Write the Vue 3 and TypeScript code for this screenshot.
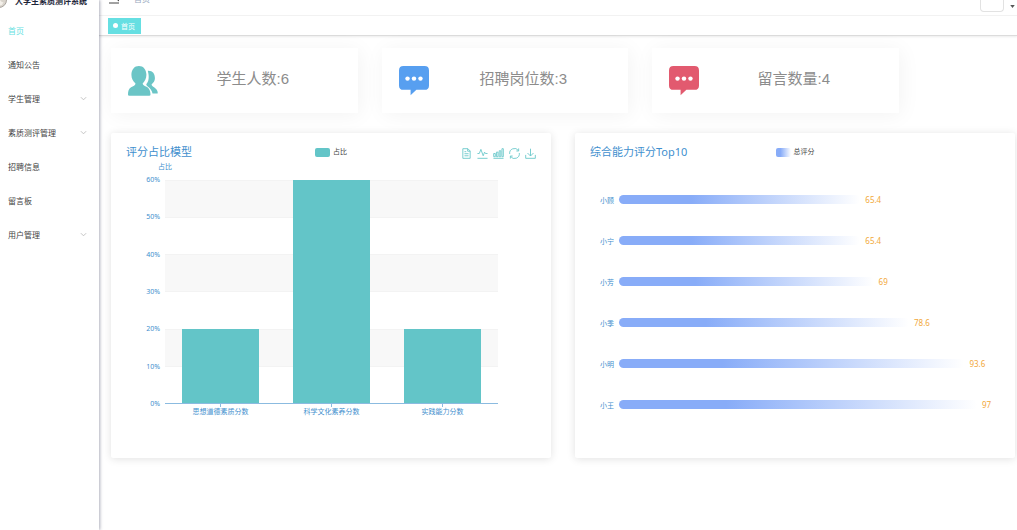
<script setup lang="ts">
interface MenuItem {
  label: string
  active?: boolean
  children?: boolean
}

interface Stat {
  label: string
  value: number
  icon: 'people' | 'chat'
  tone: string
}

interface Entry {
  name: string
  value: number
}

const menu: MenuItem[] = [
  { label: '首页', active: true },
  { label: '通知公告' },
  { label: '学生管理', children: true },
  { label: '素质测评管理', children: true },
  { label: '招聘信息' },
  { label: '留言板' },
  { label: '用户管理', children: true },
]

const stats: Stat[] = [
  { label: '学生人数', value: 6, icon: 'people', tone: 'teal' },
  { label: '招聘岗位数', value: 3, icon: 'chat', tone: 'blue' },
  { label: '留言数量', value: 4, icon: 'chat', tone: 'red' },
]

const ratioMax = 60
const ratioTicks: number[] = [60, 50, 40, 30, 20, 10, 0]
const ratios: Entry[] = [
  { name: '思想道德素质分数', value: 20 },
  { name: '科学文化素养分数', value: 60 },
  { name: '实践能力分数', value: 20 },
]

const scores: Entry[] = [
  { name: '小顾', value: 65.4 },
  { name: '小宁', value: 65.4 },
  { name: '小芳', value: 69 },
  { name: '小季', value: 78.6 },
  { name: '小明', value: 93.6 },
  { name: '小王', value: 97 },
]

const tools: { label: string; path: string }[] = [
  { label: '数据视图', path: 'M4 1.500h11l5 5v16H4zM14.500 1.500v5.500h5.500M7.500 8h4M7.500 12.500h9M7.500 17h9' },
  { label: '切换为折线图', path: 'M1 12h4l3.500-9 5 14 3-8 2 3h4.500M1 22.500h22' },
  { label: '切换为柱状图', path: 'M1.500 12h3.500v7h-3.500zM7.500 9h3.500v10h-3.500zM13.500 6h3.500v13h-3.500zM19.500 1.500h3v17.500h-3zM1 22.500h22' },
  { label: '还原', path: 'M1.500 13a10.500 10.500 0 0 1 19-7.500M22.500 11a10.500 10.500 0 0 1-19 7.500M21 1v5.500h-5M3 23v-5.500h5' },
  { label: '保存为图片', path: 'M12 1.500v16M5.500 11l6.500 6.500 6.500-6.500M1.500 15v7.500h21v-7.500' },
]
</script>

<template>
  <div class="app">
    <aside class="sidebar">
      <div class="brand">
        <svg class="brand-logo" viewBox="0 0 16 16" aria-hidden="true">
          <circle cx="8" cy="8" r="7.500" fill="#d9d4cc" stroke="#aaa59f" />
          <path d="M3 9q3-5 6-1t4 1l-2 4q-5 2-8-4z" fill="#f4f0ea" />
          <path d="M5 6l3 3 3-4" fill="none" stroke="#a39a8f" />
        </svg>
        <strong class="brand-name">大学生素质测评系统</strong>
      </div>
      <nav class="menu">
        <template v-for="item in menu" :key="item.label">
          <button v-if="item.children" type="button" class="menu-item" aria-expanded="false">
            <span>{{ item.label }}</span>
            <svg class="chevron" viewBox="0 0 8 8" aria-hidden="true"><path d="M1 2.500l3 3 3-3" /></svg>
          </button>
          <a v-else href="#" class="menu-item" :class="{ active: item.active }">{{ item.label }}</a>
        </template>
      </nav>
    </aside>

    <div class="page">
      <header class="navbar">
        <button type="button" class="hamburger" aria-label="折叠菜单">
          <svg viewBox="0 0 10 10" aria-hidden="true">
            <path d="M0 1h10M0 5.500h7M0 9h10" stroke="#444" fill="none" />
            <path d="M10 3.500v4l-2.500-2z" fill="#444" />
          </svg>
        </button>
        <span class="crumb">首页</span>
        <button type="button" class="account" aria-label="用户菜单">
          <span class="avatar"></span>
          <svg class="caret" viewBox="0 0 6 4" aria-hidden="true"><path d="M0 0h6l-3 4z" /></svg>
        </button>
      </header>
      <div class="tags">
        <a href="#" class="tag"><i class="dot"></i>首页</a>
      </div>

      <main class="content">
        <section class="stats">
          <article v-for="s in stats" :key="s.label" class="stat">
            <svg class="stat-icon" :class="s.tone" viewBox="0 0 88 88" aria-hidden="true">
              <g v-if="s.icon === 'people'">
                <path d="M32 0C45 0 54 10 54 26C54 38 49 45 43 51C43 56 52 59 58 63C64 68 66 76 66 84Q66 87 62 87H4Q0 87 0 84C0 74 2 66 9 62C15 58 22 57 22 51C15 45 10 38 10 26C10 10 19 0 32 0Z" />
                <path d="M58 14C72 13 79 22 79 36C79 44 75 49 69 54C69 59 76 61 80 65C86 70 88 76 87 81H72C70 72 66 66 58 60C54 57 53 55 54 53C61 46 63 32 58 14Z" />
              </g>
              <g v-else>
                <path d="M13 0H75Q88 0 88 13V57Q88 70 75 70H51L34 86V70H13Q0 70 0 57V13Q0 0 13 0Z" />
                <circle cx="25" cy="37" r="6.500" fill="#fff" />
                <circle cx="44" cy="37" r="6.500" fill="#fff" />
                <circle cx="63" cy="37" r="6.500" fill="#fff" />
              </g>
            </svg>
            <p class="stat-text">{{ s.label }}:{{ s.value }}</p>
          </article>
        </section>

        <section class="charts">
          <article class="panel">
            <header class="panel-head">
              <h2>评分占比模型</h2>
              <span class="legend"><i class="swatch solid"></i>占比</span>
              <div class="tools">
                <button v-for="t in tools" :key="t.label" type="button" :aria-label="t.label">
                  <svg viewBox="0 0 24 24" aria-hidden="true"><path :d="t.path" /></svg>
                </button>
              </div>
            </header>
            <div class="columns">
              <span class="axis-name">占比</span>
              <div class="y-axis">
                <span v-for="t in ratioTicks" :key="t">{{ t }}%</span>
              </div>
              <div class="plot">
                <div class="bands"><i v-for="n in 6" :key="n"></i></div>
                <div class="bars">
                  <div v-for="r in ratios" :key="r.name" class="slot">
                    <div class="bar" :style="{ height: (r.value / ratioMax) * 100 + '%' }"></div>
                  </div>
                </div>
              </div>
              <div class="x-axis">
                <span v-for="r in ratios" :key="r.name">{{ r.name }}</span>
              </div>
            </div>
          </article>

          <article class="panel">
            <header class="panel-head">
              <h2>综合能力评分Top10</h2>
              <span class="legend"><i class="swatch fade"></i>总评分</span>
            </header>
            <ul class="ranking">
              <li v-for="s in scores" :key="s.name">
                <span class="who">{{ s.name }}</span>
                <div class="track">
                  <div class="score-bar" :style="{ width: s.value + '%' }"></div>
                  <span class="score">{{ s.value }}</span>
                </div>
              </li>
            </ul>
          </article>
        </section>
      </main>
    </div>
  </div>
</template>

<style>
body {
  margin: 0;
  background: #fff;
}
</style>

<style scoped>
* {
  box-sizing: border-box;
}
.app {
  display: flex;
  min-height: 100vh;
  overflow: hidden;
  font-family: "Liberation Sans", "Noto Sans CJK SC", sans-serif;
  font-size: 8px;
  color: #444;
}
button {
  padding: 0;
  border: 0;
  background: none;
  font: inherit;
  color: inherit;
}
a {
  color: inherit;
  text-decoration: none;
}
svg {
  display: block;
}

.sidebar {
  flex: none;
  width: 99px;
  background: #fff;
  box-shadow: 1px 0 3px rgba(20, 25, 60, 0.35);
  z-index: 1;
}
.brand {
  display: flex;
  align-items: center;
  gap: 8px;
  height: 16px;
  margin: -8px 0 6px -9px;
}
.brand-logo {
  flex: none;
  width: 16px;
  height: 16px;
}
.brand-name {
  white-space: nowrap;
  color: #1c2438;
}
.menu {
  display: flex;
  flex-direction: column;
}
.menu-item {
  display: flex;
  align-items: center;
  justify-content: space-between;
  height: 34px;
  padding: 0 12px 2px 8px;
}
.menu-item.active {
  color: #66dfe2;
}
.chevron {
  width: 7px;
  height: 7px;
  fill: none;
  stroke: #bbb;
}

.page {
  flex: 1;
  min-width: 0;
}
.navbar {
  display: flex;
  align-items: flex-start;
  height: 16px;
  padding: 0 2px 0 10px;
  border-bottom: 1px solid #f3f3f3;
}
.hamburger {
  width: 10px;
  height: 10px;
  margin-top: -6px;
}
.crumb {
  margin: -8px 0 0 15px;
  line-height: 16px;
  color: #97a8be;
}
.account {
  display: flex;
  align-items: flex-end;
  gap: 6px;
  margin-left: auto;
}
.avatar {
  width: 24px;
  height: 12px;
  border: solid #e2e2e2;
  border-width: 0 1px 1px;
  border-radius: 0 0 4px 4px;
}
.caret {
  width: 5px;
  height: 3px;
  margin-bottom: 4px;
  fill: #555;
}
.tags {
  display: flex;
  align-items: center;
  height: 20px;
  padding-left: 9px;
  border-bottom: 1px solid #dcdcdc;
  box-shadow: 0 1px 2px rgba(0, 0, 0, 0.08);
}
.tag {
  display: flex;
  align-items: center;
  gap: 3px;
  height: 16px;
  padding: 0 6px 0 5px;
  font-size: 7px;
  color: #fff;
  background: #66dfe2;
}
.dot {
  width: 5px;
  height: 5px;
  border-radius: 50%;
  background: #fff;
}

.content {
  padding: 12px 2px 24px 12px;
}
.stats {
  display: grid;
  grid-template-columns: 8fr 8fr 8fr 3fr;
  gap: 24px;
  margin-bottom: 20px;
}
.stat {
  display: flex;
  align-items: center;
  height: 65px;
  padding: 0 10px 0 17px;
  background: #fff;
  box-shadow: 2px 2px 20px rgba(0, 0, 0, 0.05);
}
.stat-icon {
  flex: none;
  width: 30px;
  height: 30px;
}
.stat-icon.teal {
  fill: #6bc5c6;
}
.stat-icon.blue {
  fill: #579ff0;
}
.stat-icon.red {
  fill: #e25a6f;
}
.stat-text {
  flex: 1;
  margin: 0;
  padding-bottom: 4px;
  font-size: 15px;
  line-height: 20px;
  text-align: center;
  color: #8c8c8c;
}

.charts {
  display: grid;
  grid-template-columns: 1fr 1fr;
  gap: 24px;
  font-family: "Noto Sans", "Noto Sans CJK SC", sans-serif;
}
.panel {
  padding: 11px 0 33px;
  border-radius: 2px;
  background: #fff;
  box-shadow: 0 1px 8px rgba(0, 0, 0, 0.12);
}
.panel-head {
  display: grid;
  grid-template-columns: 1fr auto 1fr;
  align-items: center;
  height: 16px;
  padding: 0 15px;
}
.panel-head h2 {
  margin: 0;
  font-size: 11px;
  line-height: 16px;
  font-weight: 400;
  color: #3f8fce;
}
.legend {
  display: flex;
  align-items: center;
  gap: 3px;
  font-size: 7px;
  line-height: 10px;
}
.swatch {
  width: 15px;
  height: 9px;
  border-radius: 2px;
}
.swatch.solid {
  background: #63c5c8;
}
.swatch.fade {
  background: linear-gradient(90deg, #88acf8 30%, #fff);
}
.tools {
  display: flex;
  justify-content: flex-end;
  gap: 5px;
  padding-top: 3px;
}
.tools svg {
  width: 11px;
  height: 11px;
  fill: none;
  stroke: #6dc9cc;
  stroke-width: 2;
}

.columns {
  display: grid;
  grid-template-columns: 54px 1fr 53px;
  font-size: 7px;
  line-height: 8px;
  color: #3f8fce;
}
.axis-name {
  grid-column: 1 / -1;
  width: 108px;
  height: 20px;
  line-height: 14px;
  text-align: center;
}
.y-axis {
  display: flex;
  flex-direction: column;
  justify-content: space-between;
  margin: -4px 0;
  padding-right: 5px;
  text-align: right;
}
.plot {
  display: grid;
  height: 224px;
  border-bottom: 1px solid #8bbbe0;
}
.bands,
.bars {
  grid-area: 1 / 1;
}
.bands {
  display: grid;
}
.bands i {
  border-top: 1px solid #f3f3f3;
}
.bands i:nth-child(odd) {
  background: #f8f8f8;
}
.bars {
  display: flex;
}
.slot {
  display: flex;
  flex: 1;
  align-items: flex-end;
  justify-content: center;
}
.bar {
  width: 69%;
  background: #63c5c8;
}
.x-axis {
  grid-column: 2;
  display: flex;
}
.x-axis span {
  display: flex;
  flex: 1;
  flex-direction: column;
  align-items: center;
  line-height: 10px;
}
.x-axis span::before {
  content: "";
  width: 1px;
  height: 3px;
  background: #8bbbe0;
}

.ranking {
  margin: 19px 0 0;
  padding: 0 27px 0 0;
  list-style: none;
}
.ranking li {
  display: flex;
  align-items: center;
  gap: 5px;
  height: 41px;
}
.who {
  width: 39px;
  font-size: 7px;
  text-align: right;
  color: #3f8fce;
}
.track {
  display: flex;
  flex: 1;
  align-items: center;
  gap: 5px;
}
.score-bar {
  flex: none;
  height: 9px;
  border-radius: 5px;
  background: linear-gradient(90deg, #88acf8 30%, #fff);
}
.score {
  width: 0;
  line-height: 10px;
  color: #f2a83b;
}
</style>
